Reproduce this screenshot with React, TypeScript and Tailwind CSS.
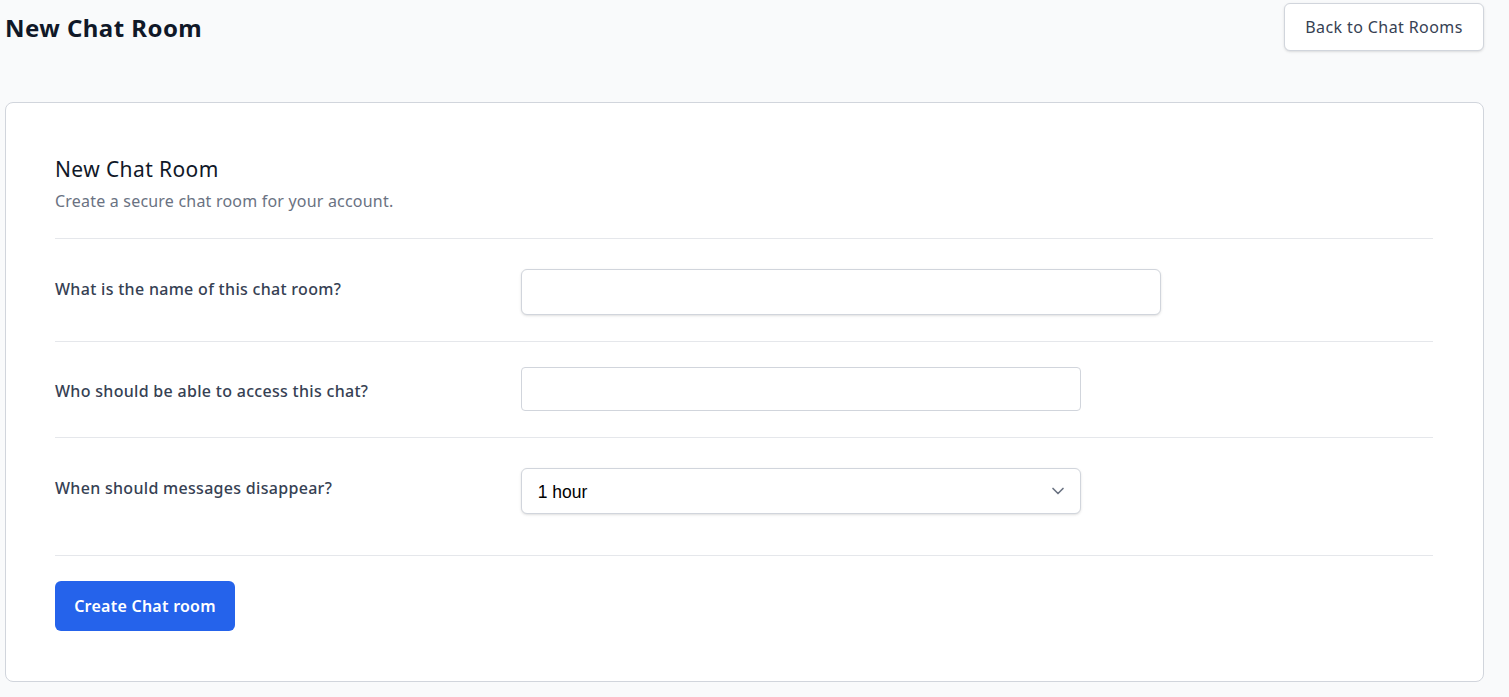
import { ChevronDown } from "lucide-react";

const font = { fontFamily: "'Noto Sans', 'Open Sans', sans-serif" };

function Row({
  label,
  children,
  className,
  labelPad,
}: {
  label: string;
  children: React.ReactNode;
  className: string;
  labelPad: string;
}) {
  return (
    <div className={`grid grid-cols-3 gap-4 border-b border-gray-200 ${className}`}>
      <label className={`text-base font-medium tracking-[0.3px] text-gray-700 ${labelPad}`}>{label}</label>
      <div className="col-span-2 pl-px">{children}</div>
    </div>
  );
}

export default function App() {
  return (
    <div className="min-h-screen bg-[#f9fafb] pl-[5px] pr-[25px] pt-[3px]" style={font}>
      {/* Header */}
      <div className="flex items-start justify-between">
        <h1 className="mt-[9px] text-2xl font-bold leading-8 tracking-[0.45px] text-gray-900">New Chat Room</h1>
        <button className="h-12 w-[200px] rounded-md border border-gray-300 bg-white text-base tracking-[0.4px] text-gray-700 shadow-sm">
          Back to Chat Rooms
        </button>
      </div>

      {/* Card */}
      <div className="mt-[51px] rounded-lg border border-gray-300 bg-white pl-[49px] pr-[50px] pt-[52px] pb-[50px]">
        <div className="border-b border-gray-200 pb-[25px]">
          <h2 className="text-[21px] leading-7 tracking-[0.4px] text-gray-900">New Chat Room</h2>
          <p className="mt-[6px] text-base leading-6 tracking-[0.2px] text-gray-500">
            Create a secure chat room for your account.
          </p>
        </div>

        <Row label="What is the name of this chat room?" className="pt-[30px] pb-[26px]" labelPad="pt-2">
          <input
            type="text"
            className="block h-[46px] w-[640px] rounded-md border border-gray-300 bg-white px-4 shadow-sm outline-none"
          />
        </Row>

        <Row label="Who should be able to access this chat?" className="pt-[25px] pb-[26px]" labelPad="pt-[12px]">
          <input
            type="text"
            className="block h-[44px] w-[560px] rounded-[4px] border border-gray-300 bg-white px-4 outline-none"
          />
        </Row>

        <Row label="When should messages disappear?" className="pt-[30px] pb-[41px]" labelPad="pt-2">
          <div className="relative w-[560px]">
            <div className="flex h-[46px] items-center rounded-md border border-gray-300 bg-white pl-4 pr-3 shadow-sm">
              <span className="mt-[2px] flex-1 font-['Liberation_Sans',Arial,sans-serif] text-[17.5px] text-black">
                1 hour
              </span>
              <ChevronDown className="h-5 w-5 text-gray-500" strokeWidth={2} />
            </div>
          </div>
        </Row>

        <div className="pt-[25px]">
          <button className="h-[50px] w-[180px] rounded-md bg-[#2563eb] text-base font-semibold tracking-[0.25px] text-white">
            Create Chat room
          </button>
        </div>
      </div>
    </div>
  );
}
